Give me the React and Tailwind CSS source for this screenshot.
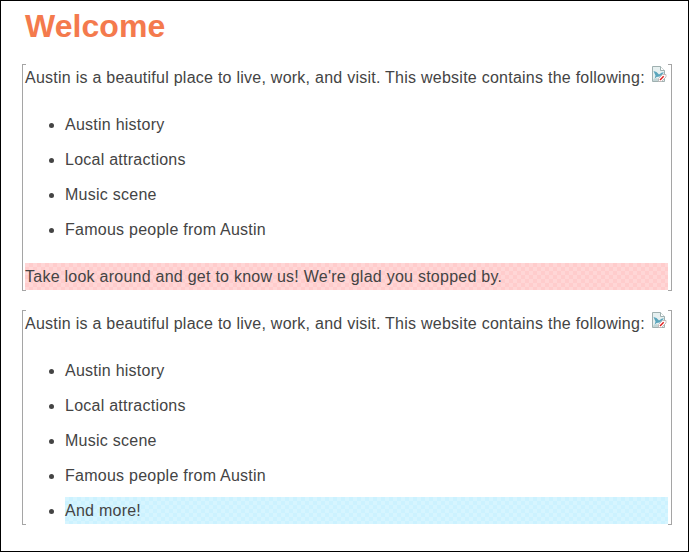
const TOPICS = ['Austin history', 'Local attractions', 'Music scene', 'Famous people from Austin'];

const PINK = 'bg-[repeating-conic-gradient(#ffcccc_0_25%,#ffd6d6_0_50%)] bg-[length:8px_8px]';
const BLUE = 'bg-[repeating-conic-gradient(#ccf2ff_0_25%,#d6f5ff_0_50%)] bg-[length:8px_8px]';

function EditIcon() {
  return (
    <svg className="mt-0.5 ml-auto mr-px h-[17px] w-[15px] shrink-0" viewBox="0 0 15 17" fill="none">
      <path d="M.5.5h8l4 4v11H.5z" fill="#e6f0f0" stroke="#9fb0b0" />
      <path d="M8.5.5v4h4" fill="#fff" stroke="#9fb0b0" />
      <path d="M1.500 5l3 1 2.500 2.500 3-2h2l-2.500 2.500-2 1.500-3 .5-2 2 1-3.500z" fill="#5aa5bc" />
      <path d="M1 13.500l4-1.500 2 2v1H1z" fill="#c3d5d6" />
      <path d="M6.500 12.500l4-4 3.500 0v2.500l-4.500 4.500-3 0z" fill="#fff" stroke="#b5b0b0" strokeWidth=".8" />
      <path d="M8 14l3.700-3.700" stroke="#e01c1c" strokeWidth="1.400" />
    </svg>
  );
}

function Region({ children }) {
  return (
    <section className="flex">
      <div className="-mr-px w-1 shrink-0 border-y border-l border-[#a5a5a5]" />
      <div className="w-[643px] shrink-0 pb-px">
        <div className="flex h-[27px]">
          <p className="whitespace-nowrap">
            Austin is a beautiful place to live, work, and visit. This website contains the following:
          </p>
          <EditIcon />
        </div>
        {children}
      </div>
      <div className="w-1 shrink-0 border-y border-r border-[#a5a5a5]" />
    </section>
  );
}

function TopicList({ children }) {
  return (
    <ul className="mt-5 flex list-disc flex-col gap-2 pl-10">
      {TOPICS.map((topic) => (
        <li key={topic}>{topic}</li>
      ))}
      {children}
    </ul>
  );
}

export default function App() {
  return (
    <main className="h-[552px] w-[689px] overflow-hidden border border-black bg-white pl-[21px] font-['Liberation_Sans',Arial,sans-serif] text-base leading-[27px] tracking-[0.25px] text-[#444]">
      <h1 className="mt-[5px] mb-[18px] pl-[3px] text-[32px] leading-10 font-bold tracking-[0.05px] text-[#f47a4d]">Welcome</h1>
      <div className="flex flex-col gap-[19px]">
        <Region>
          <TopicList />
          <p className={`mt-5 ${PINK}`}>Take look around and get to know us! We're glad you stopped by.</p>
        </Region>
        <Region>
          <TopicList>
            <li>
              <div className={BLUE}>And more!</div>
            </li>
          </TopicList>
        </Region>
      </div>
    </main>
  );
}
